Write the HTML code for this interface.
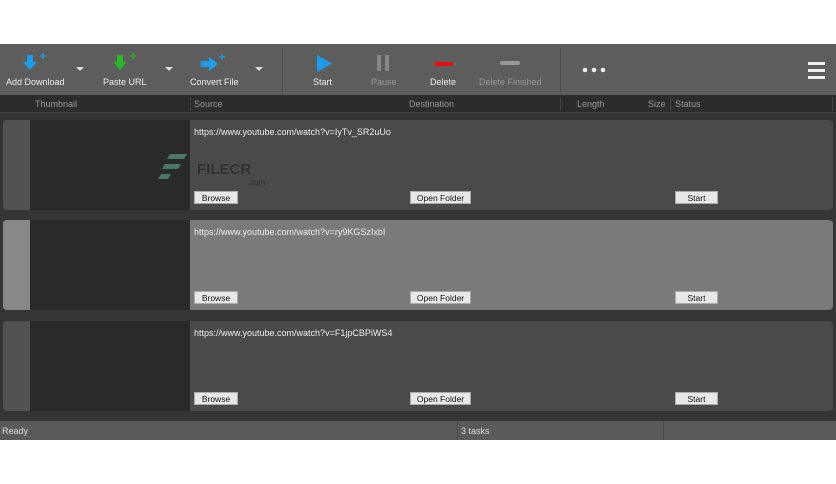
<!DOCTYPE html>
<html><head><style>
*{margin:0;padding:0;box-sizing:border-box}
body{width:836px;height:484px;background:#fff;font-family:"Liberation Sans",sans-serif;font-size:9px;color:#ddd;position:relative;overflow:hidden}
.a{position:absolute}
.tb{left:0;top:44px;width:836px;height:51px;background:#5d5d5d}
.lbl{position:absolute;top:77px;font-size:9px;color:#eee;white-space:nowrap}
.hdr{left:0;top:95px;width:836px;height:18px;background:#2c2c2c;border-bottom:1px solid #444}
.hdr span{position:absolute;top:4px;color:#999;font-size:9px}
.list{left:0;top:113px;width:836px;height:308px;background:#353535}
.row{position:absolute;left:3px;width:830px;height:90px;border-radius:4px;overflow:hidden;background:#4a4a4a}
.tab{position:absolute;left:0;top:0;width:27px;height:90px;background:#525252}
.th{position:absolute;left:27px;top:0;width:160px;height:90px;background:#2a2a2a}
.url{position:absolute;left:191px;top:7px;color:#eee;font-size:9px}
.btn{position:absolute;top:71px;height:13px;background:#e8e8e8;color:#111;font-size:8.5px;text-align:center;line-height:13px;border:1px solid #aaa}
.st{left:0;top:421px;width:836px;height:19px;background:#5a5a5a}
.st span{position:absolute;top:5px;color:#ddd;font-size:9px}
</style></head><body>
<div class="a tb"></div>
<div class="a" style="left:282px;top:48px;width:1px;height:44px;background:#4d4d4d"></div>
<div class="a" style="left:560px;top:48px;width:1px;height:44px;background:#4d4d4d"></div>
<svg class="a" style="left:0;top:44px" width="836" height="51">
<g fill="#1e9be8"><rect x="27" y="11" width="6" height="8"/><path d="M23 18h14l-7 8z"/><path d="M40 12h6M43 9v6" stroke="#1e9be8" stroke-width="1.3"/></g>
<g fill="#2ab52a"><rect x="117" y="11" width="6" height="8"/><path d="M113 18h14l-7 8z"/><path d="M130 12h6M133 9v6" stroke="#2ab52a" stroke-width="1.3"/></g>
<g fill="#1e9be8"><rect x="201" y="17" width="9" height="6"/><path d="M209 13v14l9-7z"/><path d="M219 13h6M222 10v6" stroke="#1e9be8" stroke-width="1.3"/></g>
<g fill="#ddd"><path d="M76 23h8l-4 4z"/><path d="M165 23h8l-4 4z"/><path d="M255 23h8l-4 4z"/></g>
<path d="M317 11v17l15-8.5z" fill="#1e9be8"/>
<rect x="377" y="11" width="4" height="16" fill="#888"/><rect x="385" y="11" width="4" height="16" fill="#888"/>
<rect x="434" y="18" width="19" height="4" rx="2" fill="#e01010"/>
<rect x="500" y="17" width="20" height="4" rx="2" fill="#999"/>
<circle cx="585" cy="26" r="2.3" fill="#eee"/><circle cx="594" cy="26" r="2.3" fill="#eee"/><circle cx="603" cy="26" r="2.3" fill="#eee"/>
<g fill="#eee"><rect x="808" y="18" width="17" height="3"/><rect x="808" y="25" width="17" height="3"/><rect x="808" y="32" width="17" height="3"/></g>
</svg>
<span class="lbl" style="left:6px">Add Download</span>
<span class="lbl" style="left:103px">Paste URL</span>
<span class="lbl" style="left:190px">Convert File</span>
<span class="lbl" style="left:313px">Start</span>
<span class="lbl" style="left:371px;color:#999">Pause</span>
<span class="lbl" style="left:430px">Delete</span>
<span class="lbl" style="left:479px;color:#999">Delete Finished</span>
<div class="a hdr"><span style="left:35px">Thumbnail</span><span style="left:194px">Source</span><span style="left:409px">Destination</span><span style="left:577px">Length</span><span style="left:648px">Size</span><span style="left:675px">Status</span>
<div class="a" style="left:190px;top:2px;width:1px;height:14px;background:#444"></div>
<div class="a" style="left:560px;top:2px;width:1px;height:14px;background:#444"></div>
<div class="a" style="left:670px;top:2px;width:1px;height:14px;background:#444"></div>
<div class="a" style="left:832px;top:2px;width:1px;height:14px;background:#444"></div></div>
<div class="a list">
<div class="row" style="top:7px"><div class="tab"></div><div class="th"></div><div class="url">https://www.youtube.com/watch?v=IyTv_SR2uUo</div>
<div class="btn" style="left:191px;width:44px">Browse</div><div class="btn" style="left:407px;width:61px">Open Folder</div><div class="btn" style="left:672px;width:43px">Start</div></div>
<div class="row" style="top:107px;background:#7a7a7a"><div class="tab" style="background:#888"></div><div class="th"></div><div class="url">https://www.youtube.com/watch?v=ry9KGSzIxbI</div>
<div class="btn" style="left:191px;width:44px">Browse</div><div class="btn" style="left:407px;width:61px">Open Folder</div><div class="btn" style="left:672px;width:43px">Start</div></div>
<div class="row" style="top:208px"><div class="tab"></div><div class="th"></div><div class="url">https://www.youtube.com/watch?v=F1jpCBPiWS4</div>
<div class="btn" style="left:191px;width:44px">Browse</div><div class="btn" style="left:407px;width:61px">Open Folder</div><div class="btn" style="left:672px;width:43px">Start</div></div>
</div>
<svg class="a" style="left:158px;top:152px" width="40" height="36"><g fill="#4a7a66"><path d="M12 2h17l-3 5H9z"/><path d="M7 12h16l-3 5H4z"/><path d="M3 22h10l-3 5H0z"/></g></svg>
<div class="a" style="left:197px;top:161px;font-size:15px;font-weight:bold;color:#2e2e2e;text-shadow:0 0 1px #666">FILECR</div>
<div class="a" style="left:248px;top:178px;font-size:8px;color:#2e2e2e">.com</div>
<div class="a st"><span style="left:2px">Ready</span><span style="left:461px">3 tasks</span>
<div class="a" style="left:457px;top:0;width:1px;height:19px;background:#4a4a4a"></div><div class="a" style="left:663px;top:0;width:1px;height:19px;background:#4a4a4a"></div></div>
</body></html>
